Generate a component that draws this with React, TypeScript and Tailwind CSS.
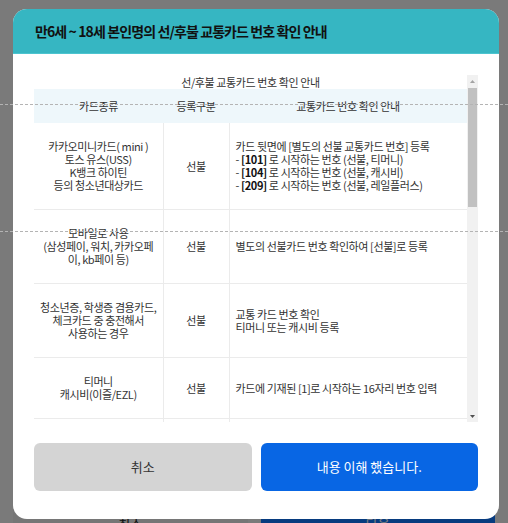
import React from 'react';

type Row = {
  card: string[];
  kind: string;
  guide: React.ReactNode[];
};

const rows: Row[] = [
  {
    card: ['카카오미니카드( mini )', '토스 유스(USS)', 'K뱅크 하이틴', '등의 청소년대상카드'],
    kind: '선불',
    guide: [
      '카드 뒷면에 [별도의 선불 교통카드 번호] 등록',
      <>- <b className="font-bold text-[#111]">[101]</b> 로 시작하는 번호 (선불, 티머니)</>,
      <>- <b className="font-bold text-[#111]">[104]</b> 로 시작하는 번호 (선불, 캐시비)</>,
      <>- <b className="font-bold text-[#111]">[209]</b> 로 시작하는 번호 (선불, 레일플러스)</>,
    ],
  },
  {
    // wraps like the original cell
    card: ['모바일로 사용', '(삼성페이, 워치, 카카오페', '이, kb페이 등)'],
    kind: '선불',
    guide: ['별도의 선불카드 번호 확인하여 [선불]로 등록'],
  },
  {
    card: ['청소년증, 학생증 겸용카드,', '체크카드 중 충전해서', '사용하는 경우'],
    kind: '선불',
    guide: ['교통 카드 번호 확인', '티머니 또는 캐시비 등록'],
  },
  {
    card: ['티머니', '캐시비(이즐/EZL)'],
    kind: '선불',
    guide: ['카드에 기재된 [1]로 시작하는 16자리 번호 입력'],
  },
  {
    card: ['신용/체크카드'],
    kind: '후불',
    guide: ['카드 번호 그대로 입력'],
  },
];

const Scrollbar = () => (
  <div className="flex w-[11px] shrink-0 flex-col bg-[#f1f1f1]">
    <div className="flex h-[13px] items-center justify-center">
      <svg width="5" height="3" viewBox="0 0 5 3">
        <path d="M2.5 0 L5 3 L0 3 Z" fill="#a3a3a3" />
      </svg>
    </div>
    <div className="mx-[1px] h-[119px] bg-[#c1c1c1]" />
    <div className="flex-1" />
    <div className="flex h-[12px] items-center justify-center">
      <svg width="5" height="3" viewBox="0 0 5 3">
        <path d="M0 0 L5 0 L2.5 3 Z" fill="#505050" />
      </svg>
    </div>
  </div>
);

export default function App() {
  return (
    <div className="relative h-[523px] w-[508px] overflow-hidden bg-[#f4f4f4] font-['Noto_Sans_CJK_KR','Noto_Sans',sans-serif]">
      {/* page underneath */}
      <div className="flex h-full flex-col justify-end">
        <div className="mb-[-25px] flex h-[48px] gap-[13px] px-[13px]">
          <div className="flex flex-1 items-center justify-center bg-[#ececec] text-[13px] text-[#222]">취소</div>
          <div className="flex flex-1 items-center justify-center bg-[#0e76ff] text-[13px] text-white">다음</div>
        </div>
      </div>

      {/* dim */}
      <div className="absolute inset-0 bg-black/50" />

      {/* modal */}
      <div className="absolute left-[13px] top-[9px] flex h-[510px] w-[486px] flex-col overflow-hidden rounded-[14px] bg-white">
        <div className="flex h-[45px] shrink-0 items-center border-b border-[#4cc4cf] bg-[#36b6c2] pl-[22px]">
          <h2 className="text-[14px] font-bold tracking-[-0.9px] text-[#111]">
            만6세 ~ 18세 본인명의 선/후불 교통카드 번호 확인 안내
          </h2>
        </div>

        <div className="flex flex-1 flex-col px-[21px] pb-[28px] pt-[21px]">
          <div className="flex h-[347px] overflow-hidden">
            <div className="flex-1 overflow-hidden">
              <table className="w-full table-fixed border-collapse text-[11px] leading-[13px] tracking-[-0.4px] text-[#333]">
                <caption className="h-[14px] text-[11px] leading-[14px] text-[#333]">
                  선/후불 교통카드 번호 확인 안내
                </caption>
                <colgroup>
                  <col className="w-[129px]" />
                  <col className="w-[66px]" />
                  <col />
                </colgroup>
                <thead>
                  <tr className="h-[34px] bg-[#eef7fb]">
                    <th className="font-normal">카드종류</th>
                    <th className="font-normal">등록구분</th>
                    <th className="font-normal">교통카드 번호 확인 안내</th>
                  </tr>
                </thead>
                <tbody>
                  {rows.map((row, i) => (
                    <tr key={i} className="border-b border-[#ebebeb]">
                      <td className="border-r border-[#ebebeb] px-[4px] py-[17px] text-center align-middle">
                        {row.card.map((line, j) => (
                          <div key={j} className="whitespace-nowrap">{line}</div>
                        ))}
                      </td>
                      <td className="border-r border-[#ebebeb] py-[17px] text-center align-middle">{row.kind}</td>
                      <td className="py-[17px] pl-[6px] pr-[6px] text-left align-middle">
                        {row.guide.map((line, j) => (
                          <div key={j}>{line}</div>
                        ))}
                      </td>
                    </tr>
                  ))}
                </tbody>
              </table>
            </div>
            <Scrollbar />
          </div>

          <div className="mt-[21px] flex h-[48px] gap-[9px]">
            <button className="flex-1 rounded-[6px] bg-[#d4d4d4] text-[13px] text-[#333]">취소</button>
            <button className="flex-1 rounded-[6px] bg-[#0866e4] text-[13px] text-white">내용 이해 했습니다.</button>
          </div>
        </div>
      </div>

      {/* guide lines over everything */}
      <div className="pointer-events-none absolute left-0 right-0 top-[104px] border-t border-dashed border-[#b4b4b4]" />
      <div className="pointer-events-none absolute left-0 right-0 top-[231px] border-t border-dashed border-[#b4b4b4]" />
    </div>
  );
}
